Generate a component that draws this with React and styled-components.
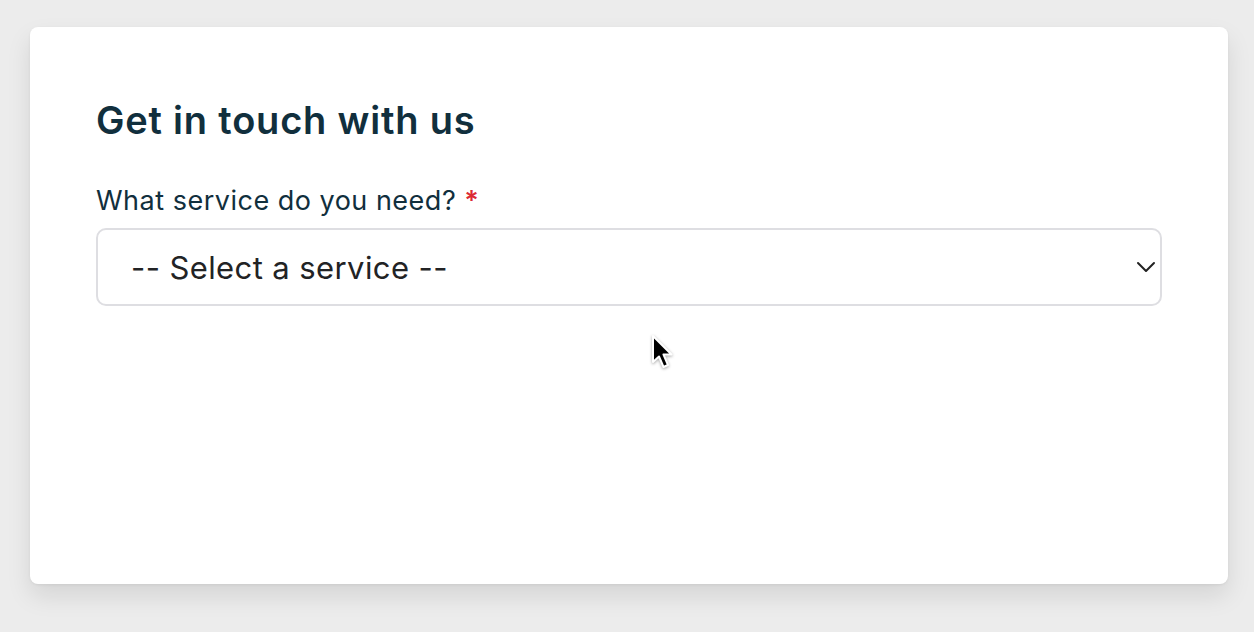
import React from "react";
import styled, { createGlobalStyle } from "styled-components";

const Global = createGlobalStyle`
  html, body { margin: 0; padding: 0; }
  body {
    background: #ececec;
    font-family: Inter, "Noto Sans", sans-serif;
    -webkit-font-smoothing: antialiased;
  }
`;

const Page = styled.div`
  position: relative;
  width: 1254px;
  height: 632px;
  padding: 27px 26px 48px 30px;
  box-sizing: border-box;
`;

const Card = styled.section`
  background: #ffffff;
  border-radius: 8px;
  height: 557px;
  box-sizing: border-box;
  padding: 71px 66px 0 66px;
  box-shadow: 0 12px 24px rgba(0, 0, 0, 0.1), 0 1px 3px rgba(0, 0, 0, 0.06);
  display: flex;
  flex-direction: column;
`;

const Title = styled.h2`
  margin: 0;
  font-size: 38px;
  line-height: 44px;
  font-weight: 600;
  letter-spacing: 0.8px;
  color: #112f3d;
`;

const Field = styled.div`
  margin-top: 43px;
  display: flex;
  flex-direction: column;
  gap: 11px;
`;

const Label = styled.label`
  font-size: 27px;
  line-height: 32px;
  font-weight: 400;
  letter-spacing: 0.5px;
  color: #112f3d;
`;

const Required = styled.span`
  color: #dc2a34;
  font-weight: 600;
`;

const SelectBox = styled.div`
  height: 78px;
  flex-shrink: 0;
  box-sizing: border-box;
  border: 2px solid #dedee2;
  border-radius: 10px;
  display: flex;
  align-items: center;
  justify-content: space-between;
  padding: 0 2px 0 33px;
  background: #fff;
`;

const SelectText = styled.span`
  font-size: 31px;
  letter-spacing: 0.4px;
  color: #222325;
  font-weight: 400;
`;

const Chevron = styled.svg`
  width: 24px;
  height: 24px;
`;

const Cursor = styled.svg`
  position: absolute;
  left: 650px;
  top: 334px;
  width: 26px;
  height: 38px;
  filter: drop-shadow(0 1px 1.5px rgba(0, 0, 0, 0.35));
`;

export default function App() {
  return (
    <>
      <Global />
      <Page>
        <Card>
          <Title>Get in touch with us</Title>
          <Field>
            <Label>
              What service do you need? <Required>*</Required>
            </Label>
            <SelectBox role="combobox">
              <SelectText>-- Select a service --</SelectText>
              <Chevron viewBox="0 0 24 24" fill="none">
                <path d="M4 8 L12 16 L20 8" stroke="#222" strokeWidth="2" strokeLinecap="round" strokeLinejoin="round" />
              </Chevron>
            </SelectBox>
          </Field>
        </Card>
        <Cursor viewBox="0 0 26 38">
          <path d="M3 2 L3 28 L9 22.5 L13.5 33 L18 31 L13.5 20.5 L21.5 20.5 Z" fill="#000" stroke="#fff" strokeWidth="2" strokeLinejoin="round" />
        </Cursor>
      </Page>
    </>
  );
}
